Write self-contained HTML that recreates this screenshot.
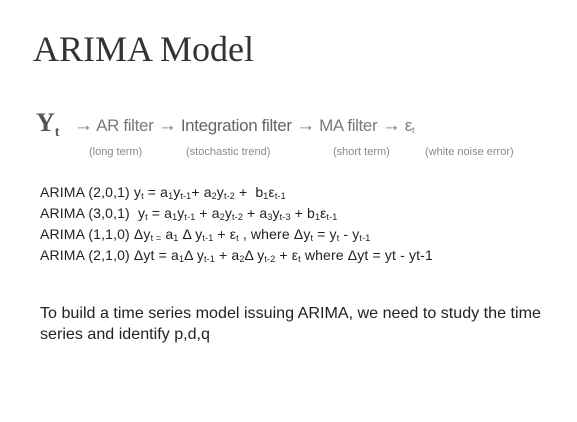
<!DOCTYPE html>
<html><head><style>
body{margin:0;width:577px;height:422px;background:#fff;position:relative;overflow:hidden;font-family:"Liberation Sans",sans-serif}
.a{position:absolute;white-space:nowrap}
h1{position:absolute;left:33px;top:28px;margin:0;font:36px "Liberation Serif",serif;color:#333}
.r{left:74px;top:115px;font-size:17px;color:#7a7a7a;letter-spacing:-0.35px}
.r b{font-weight:normal;font-size:19px}
.p{top:146px;font-size:11px;color:#8a8a8a}
.eq{left:40px;font-size:14px;color:#222;letter-spacing:0.15px}
sub{font-size:9px;vertical-align:-2px}
.t{left:40px;font-size:16.1px;color:#222;letter-spacing:0px}
</style></head><body>
<h1>ARIMA Model</h1>
<div class="a" style="left:36px;top:108px;font:bold 26px 'Liberation Serif',serif;color:#555">Y<sub style="font-size:14px;vertical-align:-5px">t</sub></div>
<div class="a r"><b>→</b> AR filter <b>→</b> <span style="color:#666">Integration filter</span> <b>→</b> MA filter <b>→</b> ε<sub>t</sub></div>
<div class="a p" style="left:89px">(long term)</div>
<div class="a p" style="left:186px">(stochastic trend)</div>
<div class="a p" style="left:333px">(short term)</div>
<div class="a p" style="left:425px">(white noise error)</div>
<div class="a eq" style="top:184px">ARIMA (2,0,1) y<sub>t</sub> = a<sub>1</sub>y<sub>t-1</sub>+ a<sub>2</sub>y<sub>t-2</sub> + &nbsp;b<sub>1</sub>ε<sub>t-1</sub></div>
<div class="a eq" style="top:205px">ARIMA (3,0,1) &nbsp;y<sub>t</sub> = a<sub>1</sub>y<sub>t-1</sub> + a<sub>2</sub>y<sub>t-2</sub> + a<sub>3</sub>y<sub>t-3</sub> + b<sub>1</sub>ε<sub>t-1</sub></div>
<div class="a eq" style="top:226px">ARIMA (1,1,0) Δy<sub>t =</sub> a<sub>1</sub> Δ y<sub>t-1</sub> + ε<sub>t</sub> , where Δy<sub>t</sub> = y<sub>t</sub> - y<sub>t-1</sub></div>
<div class="a eq" style="top:247px">ARIMA (2,1,0) Δyt = a<sub>1</sub>Δ y<sub>t-1</sub> + a<sub>2</sub>Δ y<sub>t-2</sub> + ε<sub>t</sub> where Δyt = yt - yt-1</div>
<div class="a t" style="top:304px">To build a time series model issuing ARIMA, we need to study the time</div>
<div class="a t" style="top:325px">series and identify p,d,q</div>
</body></html>
